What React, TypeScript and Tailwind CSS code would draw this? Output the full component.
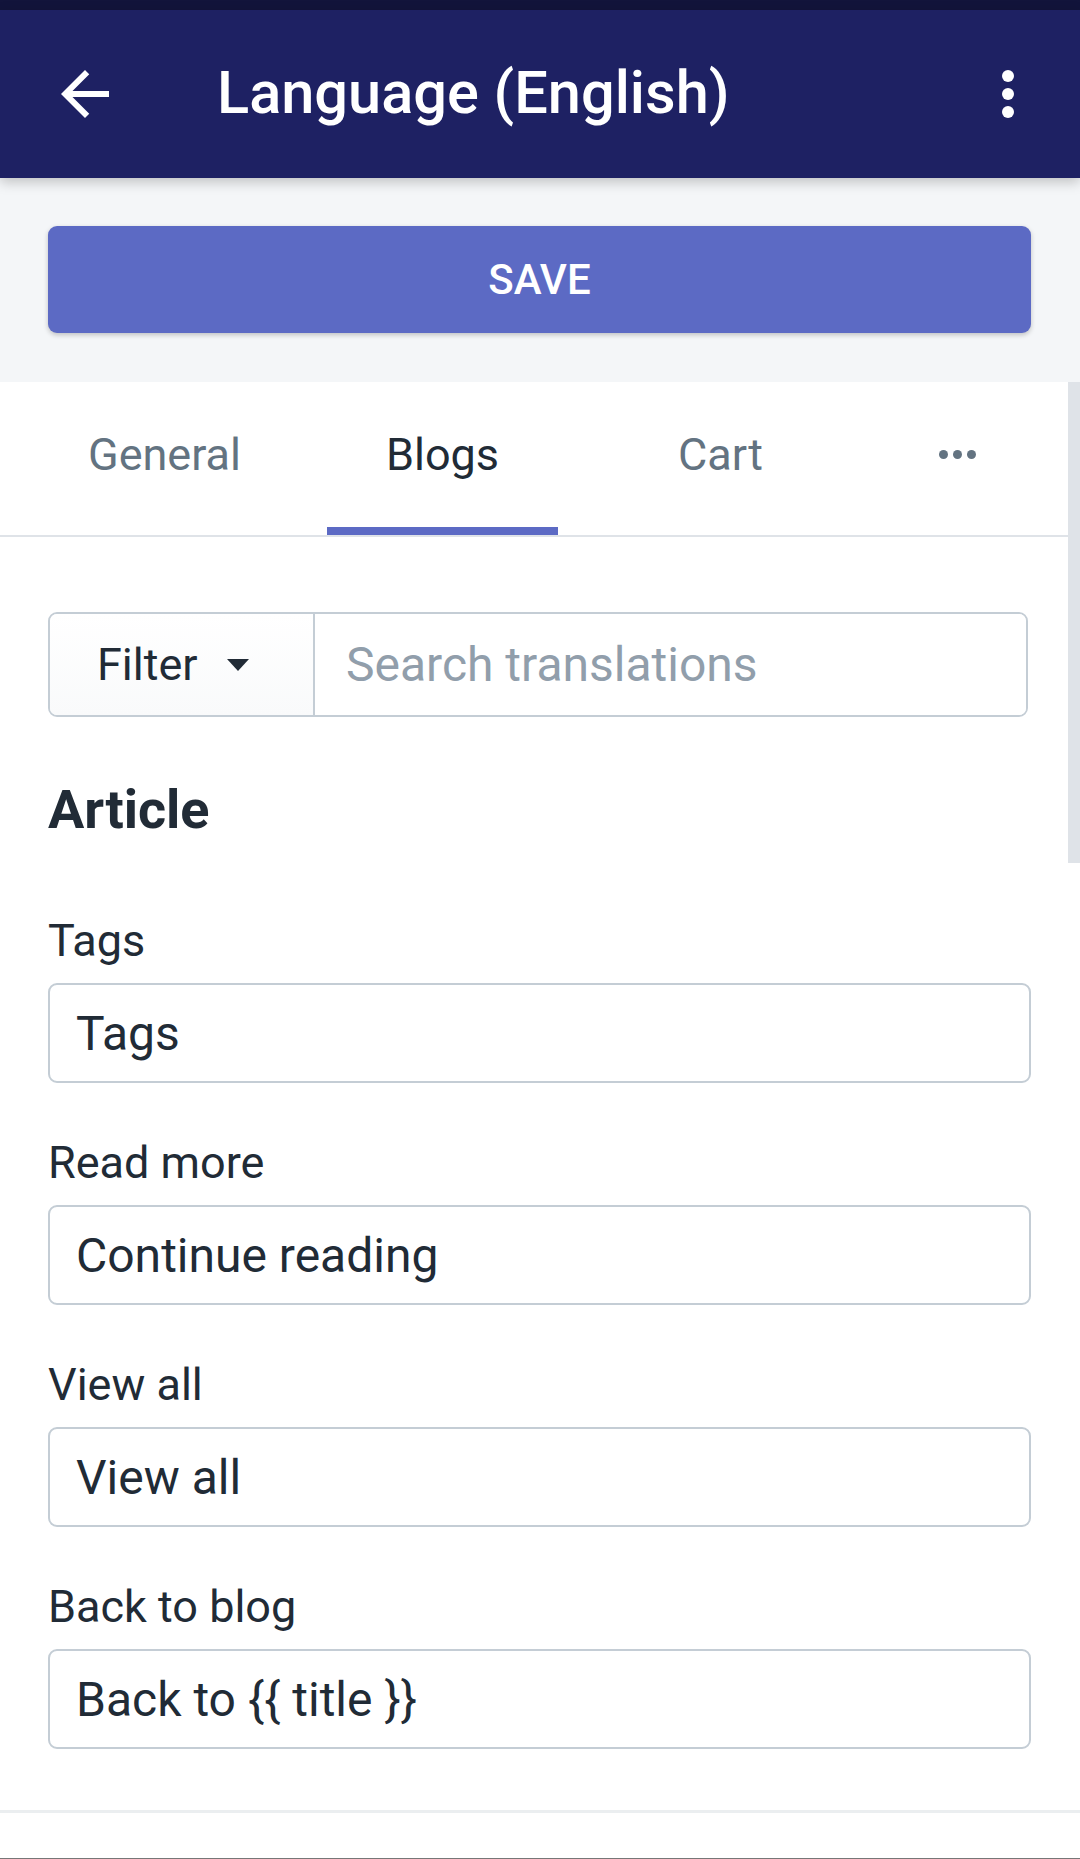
import React from 'react';

const fields = [
  { label: 'Tags', value: 'Tags' },
  { label: 'Read more', value: 'Continue reading' },
  { label: 'View all', value: 'View all' },
  { label: 'Back to blog', value: 'Back to {{ title }}' },
];

const tabs = ['General', 'Blogs', 'Cart'];

function App() {
  return (
    <div className="w-[1080px] h-[1859px] bg-white font-['Roboto',sans-serif] flex flex-col overflow-hidden">
      {/* status bar strip */}
      <div className="h-[10px] bg-[#12143b]" />

      {/* app bar */}
      <div className="relative z-10 h-[168px] bg-[#1e2163] flex items-center shadow-[0_4px_12px_rgba(0,0,0,0.22)]">
        <div className="ml-[49px] w-[72px] h-[72px] flex items-center justify-center">
          <svg viewBox="0 0 24 24" className="w-[72px] h-[72px]" fill="#ffffff">
            <path d="M20 11H7.83l5.59-5.59L12 4l-8 8 8 8 1.41-1.41L7.83 13H20v-2z" />
          </svg>
        </div>
        <h1 className="ml-[96px] text-[59.5px] font-medium text-white leading-none">Language (English)</h1>
        <div className="ml-auto mr-[36px] w-[72px] h-[72px]">
          <svg viewBox="0 0 24 24" className="w-[72px] h-[72px]" fill="#ffffff">
            <circle cx="12" cy="6" r="2" />
            <circle cx="12" cy="12" r="2" />
            <circle cx="12" cy="18" r="2" />
          </svg>
        </div>
      </div>

      {/* save bar */}
      <div className="bg-[#f4f6f8] pl-[48px] pr-[49px] pt-[48px] pb-[49px]">
        <button className="w-full h-[107px] rounded-[9px] bg-[#5c6ac4] text-white text-[42px] font-medium shadow-[0_2px_5px_rgba(0,0,0,0.22)]">
          SAVE
        </button>
      </div>

      {/* main */}
      <div className="relative flex-1 flex flex-col">
        <div className="absolute right-0 top-0 w-[12px] h-[481px] bg-[#dfe3e8]" />

        <div className="flex pl-[49px] gap-[47px] border-b-2 border-[#dfe3e8]">
          {tabs.map((tab) => {
            const active = tab === 'Blogs';
            return (
              <div key={tab} className="w-[231px] h-[153px] flex flex-col">
                <div
                  className={`h-[145px] flex items-center justify-center text-[45px] ${
                    active ? 'text-[#212b36]' : 'text-[#637381]'
                  }`}
                >
                  {tab}
                </div>
                <div className={`h-[8px] ${active ? 'bg-[#5c6ac4]' : ''}`} />
              </div>
            );
          })}
          <div className="w-[148px] h-[145px] flex items-center justify-center gap-[5px]">
            <span className="w-[9px] h-[9px] rounded-full bg-[#637381]" />
            <span className="w-[9px] h-[9px] rounded-full bg-[#637381]" />
            <span className="w-[9px] h-[9px] rounded-full bg-[#637381]" />
          </div>
        </div>

        <div className="pl-[48px] pr-[49px] pt-[75px]">
          {/* filter + search */}
          <div className="mr-[3px] h-[105px] flex border-2 border-[#c4cdd5] rounded-[9px] overflow-hidden">
            <div className="w-[265px] flex items-center pl-[47px] bg-gradient-to-b from-white to-[#f9fafb] border-r-2 border-[#c4cdd5] text-[45px] text-[#212b36]">
              <span>Filter</span>
              <svg viewBox="0 0 24 14" className="ml-[28px] w-[24px] h-[14px]" fill="#212b36">
                <path d="M1 1h22L12 13z" />
              </svg>
            </div>
            <input
              placeholder="Search translations"
              className="flex-1 min-w-0 pl-[31px] text-[48px] text-[#212b36] placeholder:text-[#919eab] outline-none bg-white"
            />
          </div>

          <h2 className="mt-[60px] text-[54px] leading-[66px] font-bold text-[#212b36]">Article</h2>

          <div className="mt-[68px] flex flex-col gap-[50px]">
            {fields.map((f) => (
              <div key={f.label}>
                <div className="text-[45px] leading-[60px] text-[#212b36]">{f.label}</div>
                <input
                  readOnly
                  value={f.value}
                  className="mt-[12px] w-full h-[100px] border-2 border-[#c4cdd5] rounded-[9px] px-[26px] text-[48px] text-[#212b36] outline-none bg-white"
                />
              </div>
            ))}
          </div>
        </div>

        <div className="mt-[61px] h-[3px] bg-[#ebeef0]" />
        <div className="mt-auto h-[1px] bg-[#777777]" />
      </div>
    </div>
  );
}

export default App;
